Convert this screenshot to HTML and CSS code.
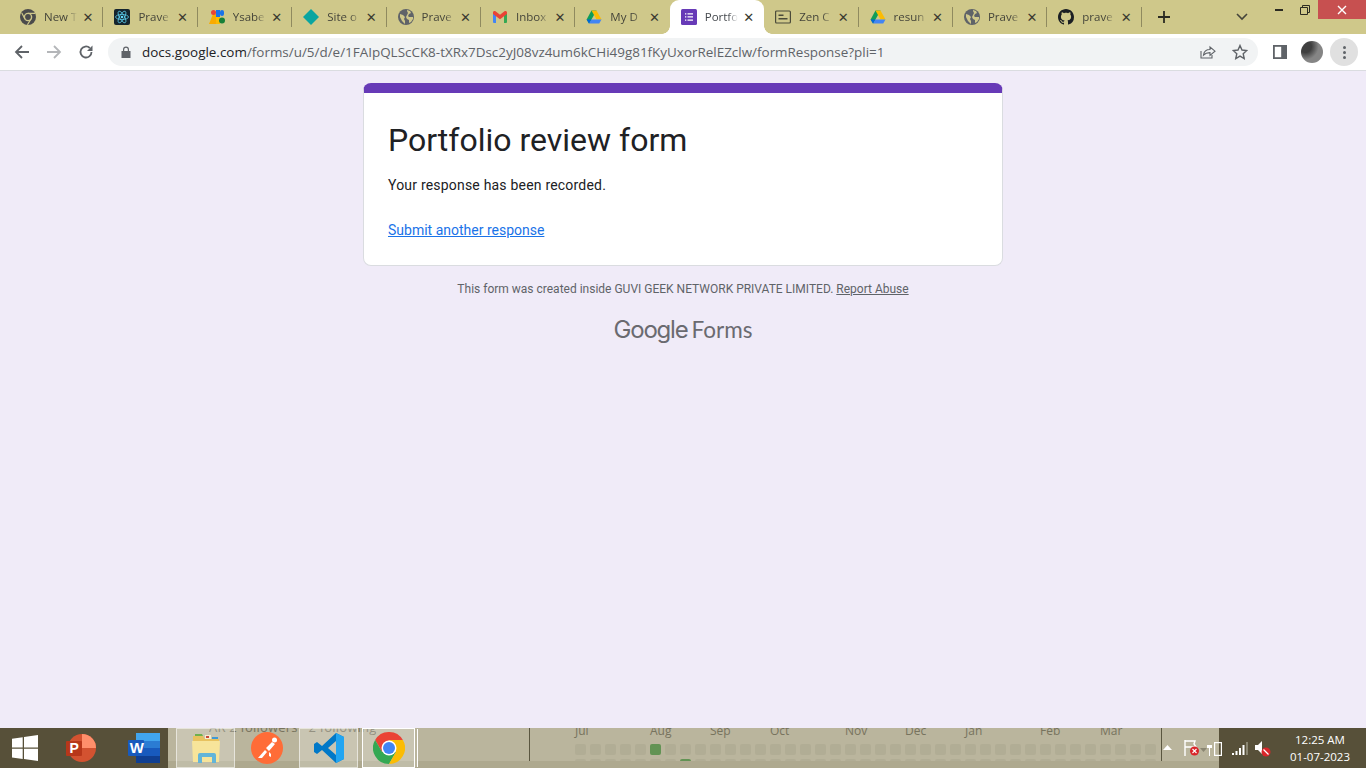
FILE: index.html
```html
<!DOCTYPE html>
<html lang="en">
<head>
    <meta charset="UTF-8">
    <title>Portfolio review form</title>
    <link rel="stylesheet" href="styles.css">
</head>
<body>
    <div class="window">
        <!-- tab strip -->
        <div class="tabstrip">
            <div class="tab">
                <svg class="favicon" viewBox="0 0 16 16"><circle cx="8" cy="8" r="8" fill="#4b4b4b"/><circle cx="8" cy="8" r="3.6" fill="#4b4b4b" stroke="#cfc88a" stroke-width="1.4"/><path d="M8 4.4h7M5 10 1.8 4M11 10l-3.600 5.800" stroke="#cfc88a" stroke-width="1.200" fill="none"/></svg>
                <span class="tab-title">New T</span><span class="tab-close">✕</span>
            </div>
            <div class="tab">
                <svg class="favicon" viewBox="0 0 16 16"><rect width="16" height="16" rx="2" fill="#14242e"/><circle cx="8" cy="8" r="1.300" fill="#61dafb"/><g fill="none" stroke="#61dafb" stroke-width=".7"><ellipse cx="8" cy="8" rx="6.500" ry="2.500"/><ellipse cx="8" cy="8" rx="6.500" ry="2.500" transform="rotate(60 8 8)"/><ellipse cx="8" cy="8" rx="6.500" ry="2.500" transform="rotate(120 8 8)"/></g></svg>
                <span class="tab-title">Prave</span><span class="tab-close">✕</span>
            </div>
            <div class="tab">
                <svg class="favicon" viewBox="0 0 16 16"><path d="M0 15 4 5h3v10z" fill="#f9ab00"/><circle cx="4.500" cy="3.500" r="2.500" fill="#ea4335"/><rect x="7" y="1" width="4" height="7" fill="#1a73e8"/><rect x="11" y="1" width="4" height="6" rx="2" fill="#1a73e8"/><path d="M7 8h4v7H7z" fill="#fbbc04"/><circle cx="13" cy="11.500" r="3" fill="#188038"/></svg>
                <span class="tab-title">Ysabe</span><span class="tab-close">✕</span>
            </div>
            <div class="tab">
                <svg class="favicon" viewBox="0 0 16 16"><path d="M8 0l8 8-8 8-8-8z" fill="#0aa5a0"/></svg>
                <span class="tab-title">Site o</span><span class="tab-close">✕</span>
            </div>
            <div class="tab">
                <svg class="favicon" viewBox="0 0 16 16"><circle cx="8" cy="8" r="8" fill="#5f6368"/><path d="M2 5l3 1 2 2-1 2 1 2v3L4 12 2 8zM9 1l3 1 1 2-2 1-1 2 1 1h4v2l-2 3-2 1v-3l-2-1-1-2 1-2 1-2-1-2z" fill="#cfc88a"/></svg>
                <span class="tab-title">Prave</span><span class="tab-close">✕</span>
            </div>
            <div class="tab">
                <svg class="favicon" viewBox="0 0 16 16"><path d="M1 14V4l3 1v9H2a1 1 0 0 1-1-1z" fill="#4285f4"/><path d="M15 14V4l-3 1v9h2a1 1 0 0 0 1-1z" fill="#34a853"/><path d="M1 3.500C1 2 2.600 1.600 3.500 2.300L8 5.800l4.500-3.500c.9-.7 2.500-.3 2.500 1.200V5l-3 2.200-4 3-4-3L1 5z" fill="#ea4335"/></svg>
                <span class="tab-title">Inbox</span><span class="tab-close">✕</span>
            </div>
            <div class="tab tab-no-sep">
                <svg class="favicon" viewBox="0 0 16 16"><path d="M5.500 1.500h5L8 6 5.500 10.500 3 14.500.6 10.500z" fill="#0f9d58"/><path d="M5.500 1.500h5l5 9h-5z" fill="#fbbc04"/><path d="M3 14.500h10.200l2.300-4H5.300z" fill="#4285f4"/><path d="M3 14.500l2.300-4H.6z" fill="#0066da"/></svg>
                <span class="tab-title">My D</span><span class="tab-close">✕</span>
            </div>
            <div class="tab tab-active tab-no-sep">
                <svg class="favicon" viewBox="0 0 16 16"><rect width="16" height="16" rx="1.500" fill="#673ab7"/><path d="M4 4.200h1.300v1.300H4zM6.500 4.200H12v1.300H6.500zM4 7.300h1.300v1.300H4zM6.500 7.300H12v1.300H6.500zM4 10.500h1.300v1.300H4zM6.500 10.500H12v1.300H6.500z" fill="#fff"/></svg>
                <span class="tab-title">Portfo</span><span class="tab-close">✕</span>
            </div>
            <div class="tab">
                <svg class="favicon" viewBox="0 0 16 16"><rect x=".6" y="2" width="14.800" height="12" rx="1" fill="none" stroke="#4b4b3a" stroke-width="1.200"/><rect x="3.500" y="5.500" width="5" height="1.500" fill="#4b4b3a"/><rect x="3.500" y="9" width="9" height="1.500" fill="#4b4b3a"/></svg>
                <span class="tab-title">Zen C</span><span class="tab-close">✕</span>
            </div>
            <div class="tab">
                <svg class="favicon" viewBox="0 0 16 16"><path d="M5.500 1.500h5L8 6 5.500 10.500 3 14.500.6 10.500z" fill="#0f9d58"/><path d="M5.500 1.500h5l5 9h-5z" fill="#fbbc04"/><path d="M3 14.500h10.200l2.300-4H5.300z" fill="#4285f4"/><path d="M3 14.500l2.300-4H.6z" fill="#0066da"/></svg>
                <span class="tab-title">resun</span><span class="tab-close">✕</span>
            </div>
            <div class="tab">
                <svg class="favicon" viewBox="0 0 16 16"><circle cx="8" cy="8" r="8" fill="#5f6368"/><path d="M2 5l3 1 2 2-1 2 1 2v3L4 12 2 8zM9 1l3 1 1 2-2 1-1 2 1 1h4v2l-2 3-2 1v-3l-2-1-1-2 1-2 1-2-1-2z" fill="#cfc88a"/></svg>
                <span class="tab-title">Prave</span><span class="tab-close">✕</span>
            </div>
            <div class="tab">
                <svg class="favicon" viewBox="0 0 16 16"><path fill="#1b1f23" d="M8 0C3.580 0 0 3.580 0 8c0 3.540 2.290 6.530 5.470 7.590.4.070.55-.17.55-.38 0-.19-.01-.82-.01-1.490-2.010.37-2.530-.49-2.690-.94-.09-.23-.48-.94-.82-1.130-.28-.15-.68-.52-.01-.53.63-.01 1.080.58 1.230.82.720 1.210 1.870.87 2.330.66.070-.52.280-.87.510-1.070-1.780-.2-3.640-.89-3.640-3.950 0-.87.310-1.590.820-2.150-.08-.2-.36-1.020.08-2.120 0 0 .67-.21 2.200.82.640-.18 1.320-.27 2-.27s1.360.09 2 .27c1.530-1.040 2.200-.82 2.200-.82.440 1.100.160 1.920.08 2.120.51.560.820 1.270.820 2.150 0 3.070-1.870 3.750-3.650 3.950.290.250.540.730.540 1.480 0 1.070-.01 1.930-.01 2.200 0 .210.150.460.550.380A8.010 8.010 0 0 0 16 8c0-4.420-3.580-8-8-8z"/></svg>
                <span class="tab-title">prave</span><span class="tab-close">✕</span>
            </div>
            <svg class="new-tab" viewBox="0 0 12 12"><path d="M6 0v12M0 6h12" stroke="#2b2b22" stroke-width="1.800"/></svg>
            <svg class="tab-list" viewBox="0 0 12 8"><path d="M1 1l5 5 5-5" fill="none" stroke="#45453a" stroke-width="1.600"/></svg>
            <div class="win-controls">
                <span class="win-btn"><svg width="10" height="10" viewBox="0 0 10 10"><path d="M1 5h8" stroke="#2b2b22" stroke-width="2"/></svg></span>
                <span class="win-btn"><svg width="10" height="10" viewBox="0 0 10 10"><path d="M.5 2.500h7v7h-7zM2.500 2.500v-2h7v7h-2" fill="none" stroke="#2b2b22"/></svg></span>
                <span class="win-btn win-close"><svg width="10" height="10" viewBox="0 0 10 10"><path d="M1 1l8 8M9 1l-8 8" stroke="#fff" stroke-width="1.400"/></svg></span>
            </div>
        </div>

        <!-- address bar -->
        <div class="toolbar">
            <svg class="tool-icon" viewBox="0 0 16 16"><path d="M15 8H2M8 2 2 8l6 6" fill="none" stroke="#5f6368" stroke-width="1.800"/></svg>
            <svg class="tool-icon" viewBox="0 0 16 16"><path d="M1 8h13M8 2l6 6-6 6" fill="none" stroke="#b4b6b9" stroke-width="1.800"/></svg>
            <svg class="tool-icon" viewBox="0 0 16 16"><path d="M13.500 8A5.500 5.500 0 1 1 11.800 4" fill="none" stroke="#5f6368" stroke-width="1.800"/><path d="M14.500 1.500v5.500H9z" fill="#5f6368"/></svg>
            <div class="omnibox">
                <svg class="lock" viewBox="0 0 10 12"><path d="M2 5V3.500a3 3 0 0 1 6 0V5h1.500v7H.5V5zm1.200 0h3.600V3.500a1.800 1.800 0 0 0-3.600 0z" fill="#5f6368"/></svg>
                <span class="url"><span class="url-host">docs.google.com</span>/forms/u/5/d/e/1FAIpQLScCK8-tXRx7Dsc2yJ08vz4um6kCHi49g81fKyUxorRelEZclw/formResponse?pli=1</span>
                <svg class="omni-icon" viewBox="0 0 16 16"><path d="M1 7v7h11v-3" fill="none" stroke="#5f6368" stroke-width="1.100"/><path d="M3.500 11c.5-3.500 3-5.500 6.500-5.500V3l5 4.200-5 4.200V8.600c-3 0-5 .8-6.500 2.400z" fill="none" stroke="#5f6368" stroke-width="1.100"/></svg>
                <svg class="omni-icon star" viewBox="0 0 16 16"><path d="M8 1.500l2 4.500 4.800.5-3.600 3.200 1 4.800L8 12.100l-4.200 2.400 1-4.800L1.200 6.500 6 6z" fill="none" stroke="#5f6368" stroke-width="1.400"/></svg>
            </div>
            <svg class="side-panel" viewBox="0 0 14 14"><path d="M0 0h14v14H0z" fill="#5f6368"/><path d="M1.800 1.800h6.400v10.400H1.800z" fill="#fff"/></svg>
            <span class="avatar"></span>
            <span class="menu-btn"><i></i><i></i><i></i></span>
        </div>

        <!-- page -->
        <main class="page">
            <section class="card">
                <h1>Portfolio review form</h1>
                <p class="recorded">Your response has been recorded.</p>
                <a class="again" href="#">Submit another response</a>
            </section>
            <p class="notice">This form was created inside GUVI GEEK NETWORK PRIVATE LIMITED. <a href="#">Report Abuse</a></p>
            <div class="brand"><span class="brand-google">Google</span><span class="brand-forms">Forms</span></div>
        </main>

        <!-- taskbar -->
        <footer class="taskbar">
            <div class="task-start">
                <svg class="win-logo" viewBox="0 0 26 26"><path d="M0 3.700l10.700-1.500v10.300H0zM12 2 26 0v12.500H12zM0 13.700h10.700v10.400L0 22.600zM12 13.700h14V26l-14-2z" fill="#fff"/></svg>
                <svg class="task-icon ppt" viewBox="0 0 32 30"><circle cx="17" cy="15" r="14" fill="#d35230"/><path d="M17 1a14 14 0 0 1 14 14H17z" fill="#ff8f6b"/><rect x="1" y="8" width="16" height="15" rx="1" fill="#b7371a"/><text x="4.500" y="20" class="ppt-letter">P</text></svg>
                <svg class="task-icon word" viewBox="0 0 32 30"><rect x="8" y="0" width="24" height="30" rx="1" fill="#2b7cd3"/><rect x="8" y="0" width="24" height="8" fill="#41a5ee"/><rect x="8" y="15" width="24" height="8" fill="#185abd"/><rect x="8" y="23" width="24" height="7" fill="#103f91"/><rect x="0" y="7" width="16" height="16" rx="1" fill="#185abd"/><text x="1.700" y="20" class="word-letter">W</text></svg>
            </div>
            <div class="task-glass">
                <div class="task-apps">
                    <span class="ghost-text">AR 2 followers · 2 following</span>
                    <span class="task-btn">
                        <svg width="28" height="32" viewBox="0 0 28 32"><path d="M1 4h10l2 3h14v9H1z" fill="#e8c25f"/><path d="M3 2h7l1 2H3z" fill="#6fb04e"/><path d="M13 3h6v4h-6z" fill="#f4efd0"/><path d="M14 4h3v2h-3z" fill="#c9493a"/><path d="M20 5h6v2h-6z" fill="#3f9ad6"/><path d="M0 9h28l-1 21H1z" fill="#f7e49a"/><path d="M6 31v-8q0-2 2-2h14q2 0 2 2v8h-4v-6H10v6z" fill="#63b5d8"/></svg>
                    </span>
                    <span class="task-plain">
                        <svg width="32" height="32" viewBox="0 0 32 32"><circle cx="16" cy="16" r="16" fill="#ff6c37"/><path d="M7 26l7-8 2 2-5 6zM15 16l6-6 3 2-6 7zM18 20l2 2 0 3-2-1z" fill="#fff"/><circle cx="23.500" cy="8" r="2.500" fill="#fff"/></svg>
                    </span>
                    <span class="task-btn task-code">
                        <svg width="32" height="32" viewBox="0 0 32 32"><path fill-rule="evenodd" d="M23 1l8 4v22l-8 4L9 18l-5 4-3-2v-8l3-2 5 4zM23 9l-8 7 8 7z" fill="#0078c8"/><path d="M23 1l8 4v22l-8 4z" fill="#22a5f1"/></svg>
                    </span>
                    <span class="task-btn task-chrome">
                        <svg width="32" height="32" viewBox="0 0 32 32"><path d="M2.140 8A16 16 0 0 1 29.860 8H16L9.070 20z" fill="#ea4335"/><path d="M2.140 8L9.070 20H22.930L16 32A16 16 0 0 1 2.140 8z" fill="#34a853"/><path d="M29.860 8H16l6.930 12L16 32A16 16 0 0 0 29.860 8z" fill="#fbbc04"/><circle cx="16" cy="16" r="7.500" fill="#fff"/><circle cx="16" cy="16" r="6" fill="#4285f4"/></svg>
                    </span>
                </div>
                <div class="github-area">
                    <div class="months">
                        <span class="m5">Jul</span><span class="m4">Aug</span><span class="m4">Sep</span><span class="m5">Oct</span><span class="m4">Nov</span><span class="m4">Dec</span><span class="m5">Jan</span><span class="m4">Feb</span><span class="m4">Mar</span>
                    </div>
                    <div class="cells">
                        <i></i><i></i><i></i><i></i><i></i><i class="on"></i><i></i><i></i><i></i><i></i><i></i><i></i><i></i><i></i><i></i><i></i><i></i><i></i><i></i><i></i><i></i><i></i><i></i><i></i><i></i><i></i><i></i><i></i><i></i><i></i><i></i><i></i><i></i><i></i><i></i><i></i><i></i><i></i><i></i>
                        <i></i><i></i><i></i><i></i><i></i><i></i><i></i><i class="on"></i><i></i><i></i><i></i><i></i><i></i><i></i><i></i><i></i><i></i><i></i><i></i><i></i><i></i><i></i><i></i><i></i><i></i><i></i><i></i><i></i><i></i><i></i><i></i><i></i><i></i><i></i><i></i><i></i><i></i><i></i><i></i>
                    </div>
                </div>
                <div class="tray-arrow"><svg width="9" height="5" viewBox="0 0 9 5"><path d="M4.500 0l4.500 5H0z" fill="#fff"/></svg></div>
                <div class="tray-icons">
                    <svg class="tray-flag" width="16" height="16" viewBox="0 0 16 16"><path d="M1 0v16M1 1h10l-1 3 2 3H1" fill="none" stroke="#fff" stroke-width="1.400"/><circle cx="10.500" cy="11" r="4.500" fill="#d9252a"/><path d="M8.500 9l4 4M12.500 9l-4 4" stroke="#fff" stroke-width="1.100"/></svg>
                    <svg class="tray-chevron" width="7" height="4" viewBox="0 0 7 4"><path d="M0 0h7L3.500 4z" fill="#8a8672"/></svg>
                    <svg class="tray-power" width="15" height="15" viewBox="0 0 15 15"><path d="M1 0v4M4 0v4M0 4h5v3H3v8H2V7H0z" fill="#fff"/><rect x="7.600" y="1.600" width="6.800" height="12.800" fill="none" stroke="#fff" stroke-width="1.200"/></svg>
                </div>
            </div>
            <div class="task-tray">
                <svg width="16" height="13" viewBox="0 0 16 13"><path d="M0 11h2v2H0zM3.500 9h2v4h-2zM7 6h2v7H7zM10.500 3h2v10h-2z" fill="#fff"/><path d="M14 0h2v13h-2z" fill="#8a8672"/></svg>
                <svg class="tray-sound" width="16" height="17" viewBox="0 0 16 17"><path d="M0 5h3l4-4v13L3 10H0z" fill="#fff"/><circle cx="11" cy="12" r="4.500" fill="#d9252a"/><path d="M8.500 9.500l5 5" stroke="#fff" stroke-width="1.300"/></svg>
                <div class="clock"><span>12:25 AM</span><span>01-07-2023</span></div>
            </div>
        </footer>
    </div>
</body>
</html>
```

FILE: styles.css
```css
* {
    box-sizing: border-box;
}
body {
    margin: 0;
    font-family: 'Roboto', sans-serif;
    overflow: hidden;
}
.window {
    width: 1366px;
    height: 768px;
    display: flex;
    flex-direction: column;
    background-color: #f0ebf8;
}

/* tab strip */
.tabstrip {
    height: 34px;
    flex: none;
    display: flex;
    align-items: stretch;
    padding-left: 9px;
    background-color: #cfc88a;
    font-family: 'Open Sans', sans-serif;
    font-size: 11.5px;
    color: #45453a;
}
.tab {
    position: relative;
    width: 94.4px;
    flex: none;
    display: flex;
    align-items: center;
    padding-left: 11px;
}
.tab::after {
    content: '';
    width: 1px;
    height: 20px;
    margin-left: auto;
    background-color: #8f8a5f;
}
.tab-no-sep::after {
    display: none;
}
.favicon {
    width: 16px;
    height: 16px;
    flex: none;
}
.tab-title {
    width: 33px;
    margin-left: 8px;
    padding-bottom: 1px;
    overflow: hidden;
    white-space: nowrap;
    -webkit-mask-image: linear-gradient(to right, #000 70%, transparent);
    mask-image: linear-gradient(to right, #000 70%, transparent);
}
.tab-close {
    width: 16px;
    margin-left: 3px;
    text-align: center;
    font-size: 13px;
    font-weight: 700;
    font-family: 'DejaVu Sans', sans-serif;
    color: #3a3a30;
}
.tab-active {
    background-color: #fff;
    border-radius: 9px 9px 0 0;
    color: #45494e;
}
/* flared bottom corners of the active tab */
.tab-active::before,
.tab-active::after {
    content: '';
    display: block;
    position: absolute;
    bottom: 0;
    width: 8px;
    height: 8px;
    margin: 0;
    background: radial-gradient(circle at 0 0, #cfc88a 7.500px, #fff 8px);
}
.tab-active::before {
    left: -8px;
}
.tab-active::after {
    right: -8px;
    background: radial-gradient(circle at 100% 0, #cfc88a 7.500px, #fff 8px);
}
.new-tab {
    width: 12px;
    height: 12px;
    flex: none;
    align-self: center;
    margin-left: 16px;
}
.tab-list {
    width: 12px;
    height: 8px;
    flex: none;
    align-self: center;
    margin-left: 66px;
}
.win-controls {
    display: flex;
    align-items: flex-start;
    margin-left: auto;
}
.win-btn {
    width: 26px;
    height: 19px;
    display: flex;
    align-items: center;
    justify-content: center;
}
.win-close {
    width: 48px;
    background-color: #c75050;
}

/* address bar */
.toolbar {
    height: 37px;
    flex: none;
    display: flex;
    align-items: center;
    padding-left: 14px;
    background-color: #fff;
    border-bottom: 1px solid #dadce0;
}
.tool-icon {
    width: 16px;
    height: 16px;
    flex: none;
    margin-right: 16px;
}
.omnibox {
    width: 1150px;
    height: 28px;
    margin-left: -2px;
    display: flex;
    align-items: center;
    padding-left: 13px;
    background-color: #f1f3f4;
    border-radius: 14px;
    font-family: 'Open Sans', sans-serif;
    font-size: 13.44px;
    color: #5f6368;
}
.lock {
    width: 10px;
    height: 12px;
    flex: none;
    margin-right: 11px;
}
.url {
    flex: 1;
    white-space: nowrap;
}
.url-host {
    color: #202124;
}
.omni-icon {
    width: 16px;
    height: 16px;
    flex: none;
    margin-right: 16px;
}
.star {
    margin-right: 10px;
}
.side-panel {
    width: 14px;
    height: 14px;
    flex: none;
    margin-left: 15px;
}
.avatar {
    width: 22px;
    height: 22px;
    flex: none;
    margin-left: 14px;
    border-radius: 50%;
    background: radial-gradient(circle at 20% 25%, #3f3f3f 0 25%, #858585 55%);
}
.menu-btn {
    width: 28px;
    height: 28px;
    flex: none;
    margin-left: 7px;
    display: flex;
    flex-direction: column;
    align-items: center;
    justify-content: center;
    gap: 2px;
    background-color: #e0e0e0;
    border-radius: 50%;
}
.menu-btn i {
    width: 3px;
    height: 3px;
    background-color: #5f6368;
    border-radius: 50%;
}

/* form response */
.page {
    flex: 1;
    display: flex;
    flex-direction: column;
    align-items: center;
    padding-top: 12px;
}
.card {
    width: 640px;
    height: 183px;
    padding: 32px 24px 0 24px;
    background-color: #fff;
    border: 1px solid #dadce0;
    border-top: 10px solid #673ab7;
    border-radius: 8px;
}
h1 {
    margin: -5px 0 0;
    font-size: 32px;
    font-weight: 400;
    line-height: 40px;
    color: #202124;
}
.recorded {
    margin: 15px 0 0;
    font-size: 14px;
    line-height: 20px;
    letter-spacing: .2px;
    color: #202124;
}
.again {
    display: inline-block;
    margin-top: 25px;
    font-size: 14px;
    line-height: 20px;
    color: #1a73e8;
}
.notice {
    margin: 15px 0 0;
    font-size: 12px;
    line-height: 16px;
    color: #5f6368;
}
.notice a {
    color: #5f6368;
}
.brand {
    margin-top: 18px;
    display: flex;
    align-items: baseline;
    gap: 4px;
    color: #6a6a70;
    line-height: 30px;
}
.brand-google {
    font-family: 'Inter', sans-serif;
    font-size: 24px;
    letter-spacing: -1.2px;
}
.brand-forms {
    font-family: 'Lato', sans-serif;
    font-size: 22.5px;
}

/* taskbar */
.taskbar {
    height: 40px;
    flex: none;
    display: flex;
    color: #fff;
    font-family: 'Open Sans', sans-serif;
}
.task-start {
    width: 168px;
    flex: none;
    display: flex;
    align-items: center;
    padding-left: 12px;
    background-color: #575039;
}
.win-logo {
    width: 26px;
    height: 26px;
    flex: none;
}
.task-icon {
    width: 32px;
    height: 30px;
    flex: none;
}
.ppt {
    margin-left: 27px;
}
.word {
    margin-left: 31px;
}
.ppt-letter,
.word-letter {
    fill: #fff;
    font-family: 'Liberation Sans', sans-serif;
    font-weight: 700;
    font-size: 14px;
}
.word-letter {
    font-size: 15px;
}
.task-glass {
    flex: 1;
    min-width: 0;
    display: flex;
    align-items: stretch;
    position: relative;
    background: linear-gradient(to bottom, #bab59d 0, #bab59d 33px, #aea98f 33px);
}
.task-apps {
    width: 362px;
    flex: none;
    position: relative;
    display: flex;
    align-items: flex-start;
    padding-left: 8px;
    height: 33px;
    border-right: 1px solid #5a5640;
}
/* text of the page behind the glass, only its lower half shows */
.ghost-text {
    position: absolute;
    left: 41px;
    top: -10px;
    font-size: 13px;
    color: #77735e;
    white-space: nowrap;
    letter-spacing: .2px;
    clip-path: inset(10px 0 0 0);
}
.task-btn {
    position: relative;
    width: 59px;
    height: 40px;
    flex: none;
    display: flex;
    align-items: center;
    justify-content: center;
    background-color: rgba(255, 255, 255, .22);
    border: 1px solid rgba(255, 255, 255, .55);
}
.task-plain {
    position: relative;
    width: 64px;
    height: 40px;
    flex: none;
    display: flex;
    align-items: center;
    justify-content: center;
}
.task-code {
    margin-right: 4px;
}
.task-chrome {
    width: 53px;
    border-color: #fff;
    box-shadow: 3px 0 0 -1px #bab59d, 4px 0 0 -1px #fff;
}
.github-area {
    width: 632px;
    flex: none;
    height: 33px;
    padding-left: 45px;
    overflow: hidden;
    border-right: 1px solid #5a5640;
    color: #77735e;
    font-size: 12px;
}
.months {
    display: grid;
    grid-template-columns: repeat(39, 15px);
    height: 16px;
    line-height: 6px;
}
.m5 {
    grid-column: span 5;
}
.m4 {
    grid-column: span 4;
}
.cells {
    display: grid;
    grid-template-columns: repeat(39, 11px);
    gap: 4px;
}
.cells i {
    height: 11px;
    background-color: #b1ad95;
    border-radius: 2px;
}
.cells .on {
    background-color: #629354;
}
.tray-arrow {
    width: 11px;
    flex: none;
    display: flex;
    align-items: center;
    justify-content: center;
    padding-bottom: 1px;
}
.tray-icons {
    flex: 1;
    min-width: 0;
    display: flex;
    align-items: center;
    padding-left: 11px;
}
.tray-flag {
    flex: none;
}
.tray-chevron {
    margin-top: 4px;
    flex: none;
}
.tray-power {
    flex: none;
}
.task-tray {
    width: 147px;
    flex: none;
    display: flex;
    align-items: center;
    padding-left: 13px;
    background-color: #575039;
}
.tray-sound {
    margin-left: 7px;
}
.clock {
    width: 84px;
    margin-left: 7px;
    display: flex;
    flex-direction: column;
    align-items: center;
    font-size: 11.5px;
    line-height: 17px;
}
```
